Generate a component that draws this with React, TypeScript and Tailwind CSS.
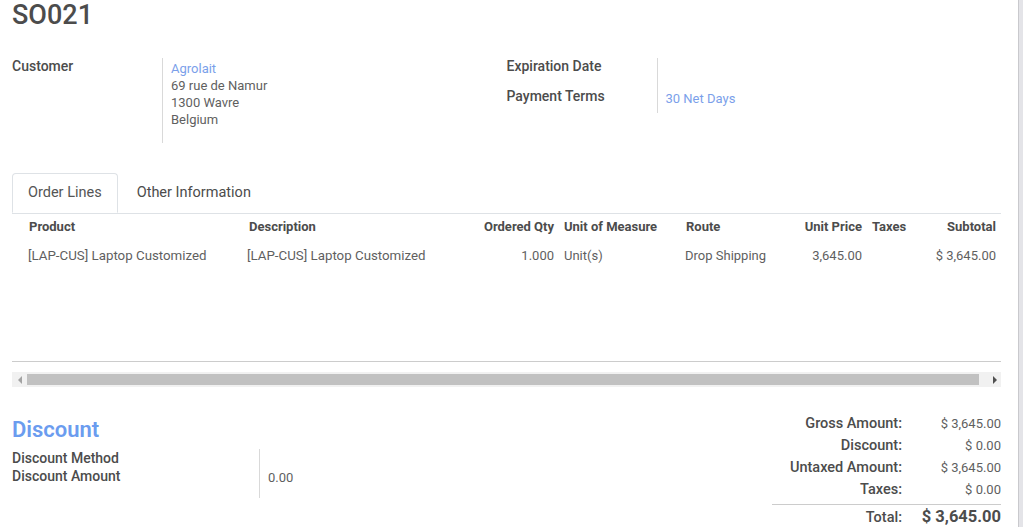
export default function App() {
  const cols = "grid grid-cols-[232px_222px_93px_122px_99px_87px_43px_91px]";

  return (
    <div className="flex h-[527px] overflow-hidden bg-[#e4e4e8] font-['Roboto',sans-serif] text-[13px] text-[#5f5f5f]">
      <div className="w-[1019px] shrink-0 border-r border-[#c9c9cd] bg-white pl-3 pr-[17px]">
        {/* title */}
        <h1 className="pt-[2px] text-[27px] font-medium leading-[27px] text-[#4c4c4c]">SO021</h1>

        {/* header fields */}
        <div className="mt-[29px] grid grid-cols-2 items-start">
          <div className="grid grid-cols-[150px_1fr] content-start items-start">
            <div className="text-[14px] font-medium leading-[17px] text-[#4c4c4c]">Customer</div>
            <div className="h-[85px] border-l border-[#d9d9d9] pl-2 pt-[2px] leading-[17px]">
              <div className="text-[#7b9fea]">Agrolait</div>
              <div>69 rue de Namur</div>
              <div>1300 Wavre</div>
              <div>Belgium</div>
            </div>
          </div>
          <div className="grid grid-cols-[150px_1fr] content-start items-start">
            <div className="text-[14px] font-medium leading-[17px] text-[#4c4c4c]">Expiration Date</div>
            <div className="h-[30px] border-l border-[#d9d9d9]" />
            <div className="text-[14px] font-medium leading-[17px] text-[#4c4c4c]">Payment Terms</div>
            <div className="h-[25px] border-l border-[#d9d9d9] pl-2 pt-[2px] leading-[17px] text-[#7b9fea]">
              30 Net Days
            </div>
          </div>
        </div>

        {/* tabs */}
        <div className="mt-[30px] flex border-b border-[#dee2e6] text-[14.5px]">
          <div className="-mb-px flex h-[40px] items-center rounded-t-[4px] border border-[#dee2e6] border-b-white bg-white px-[15px] text-[#555]">
            Order Lines
          </div>
          <div className="ml-[4px] flex h-[40px] items-center px-[15px] pb-px text-[#4c4c4c]">Other Information</div>
        </div>

        {/* order lines */}
        <div className={`${cols} h-[26px] items-center font-bold text-[#4c4c4c]`}>
          <div className="pl-[17px]">Product</div>
          <div className="px-[5px]">Description</div>
          <div className="px-[5px] text-right">Ordered Qty</div>
          <div className="px-[5px]">Unit of Measure</div>
          <div className="px-[5px]">Route</div>
          <div className="px-[5px] text-right">Unit Price</div>
          <div className="px-[5px]">Taxes</div>
          <div className="px-[5px] text-right">Subtotal</div>
        </div>
        <div className={`${cols} h-[31px] items-center`}>
          <div className="pl-[16px] text-[13.3px]">[LAP-CUS] Laptop Customized</div>
          <div className="px-[3px] text-[13.3px]">[LAP-CUS] Laptop Customized</div>
          <div className="px-[5px] text-right">1.000</div>
          <div className="px-[5px]">Unit(s)</div>
          <div className="px-[4px]">Drop Shipping</div>
          <div className="px-[5px] text-right">3,645.00</div>
          <div className="px-[5px]" />
          <div className="px-[5px] text-right">$ 3,645.00</div>
        </div>
        <div className="h-[90px]" />
        <div className="border-t border-[#cccccc]" />

        {/* horizontal scrollbar */}
        <div className="mt-[10px] flex h-[15px] items-center bg-[#f1f1f1]">
          <div className="flex w-[15px] justify-center">
            <div className="h-0 w-0 border-y-[4px] border-r-[4px] border-y-transparent border-r-[#a3a3a3]" />
          </div>
          <div className="h-[11px] w-[952px] bg-[#c1c1c1]" />
          <div className="flex flex-1 justify-end pr-[4px]">
            <div className="h-0 w-0 border-y-[4px] border-l-[4px] border-y-transparent border-l-[#505050]" />
          </div>
        </div>

        {/* bottom */}
        <div className="mt-[26px] flex justify-between">
          <div>
            <div className="mt-[5px] text-[22px] font-semibold leading-[24px] text-[#6b9cef]">Discount</div>
            <div className="mt-[7px] grid grid-cols-[247px_1fr] items-start">
              <div className="text-[14px] font-medium leading-[18px] text-[#4c4c4c]">
                <div>Discount Method</div>
                <div>Discount Amount</div>
              </div>
              <div className="h-[49px] w-[120px] border-l border-[#d9d9d9] pl-2 pt-[20px] leading-[17px]">0.00</div>
            </div>
          </div>

          <div className="w-[229px]">
            {[
              ["Gross Amount:", "$ 3,645.00"],
              ["Discount:", "$ 0.00"],
              ["Untaxed Amount:", "$ 3,645.00"],
              ["Taxes:", "$ 0.00"],
            ].map(([label, value]) => (
              <div key={label} className="grid h-[22px] grid-cols-[130px_99px] items-center">
                <div className="text-right text-[14.5px] font-medium text-[#4c4c4c]">{label}</div>
                <div className="text-right">{value}</div>
              </div>
            ))}
            <div className="mt-[3px] grid h-[23px] grid-cols-[130px_99px] items-center border-t border-[#cccccc]">
              <div className="text-right text-[14.5px] font-medium text-[#4c4c4c]">Total:</div>
              <div className="text-right text-[16.5px] font-bold text-[#4c4c4c]">$ 3,645.00</div>
            </div>
          </div>
        </div>
      </div>
    </div>
  );
}
